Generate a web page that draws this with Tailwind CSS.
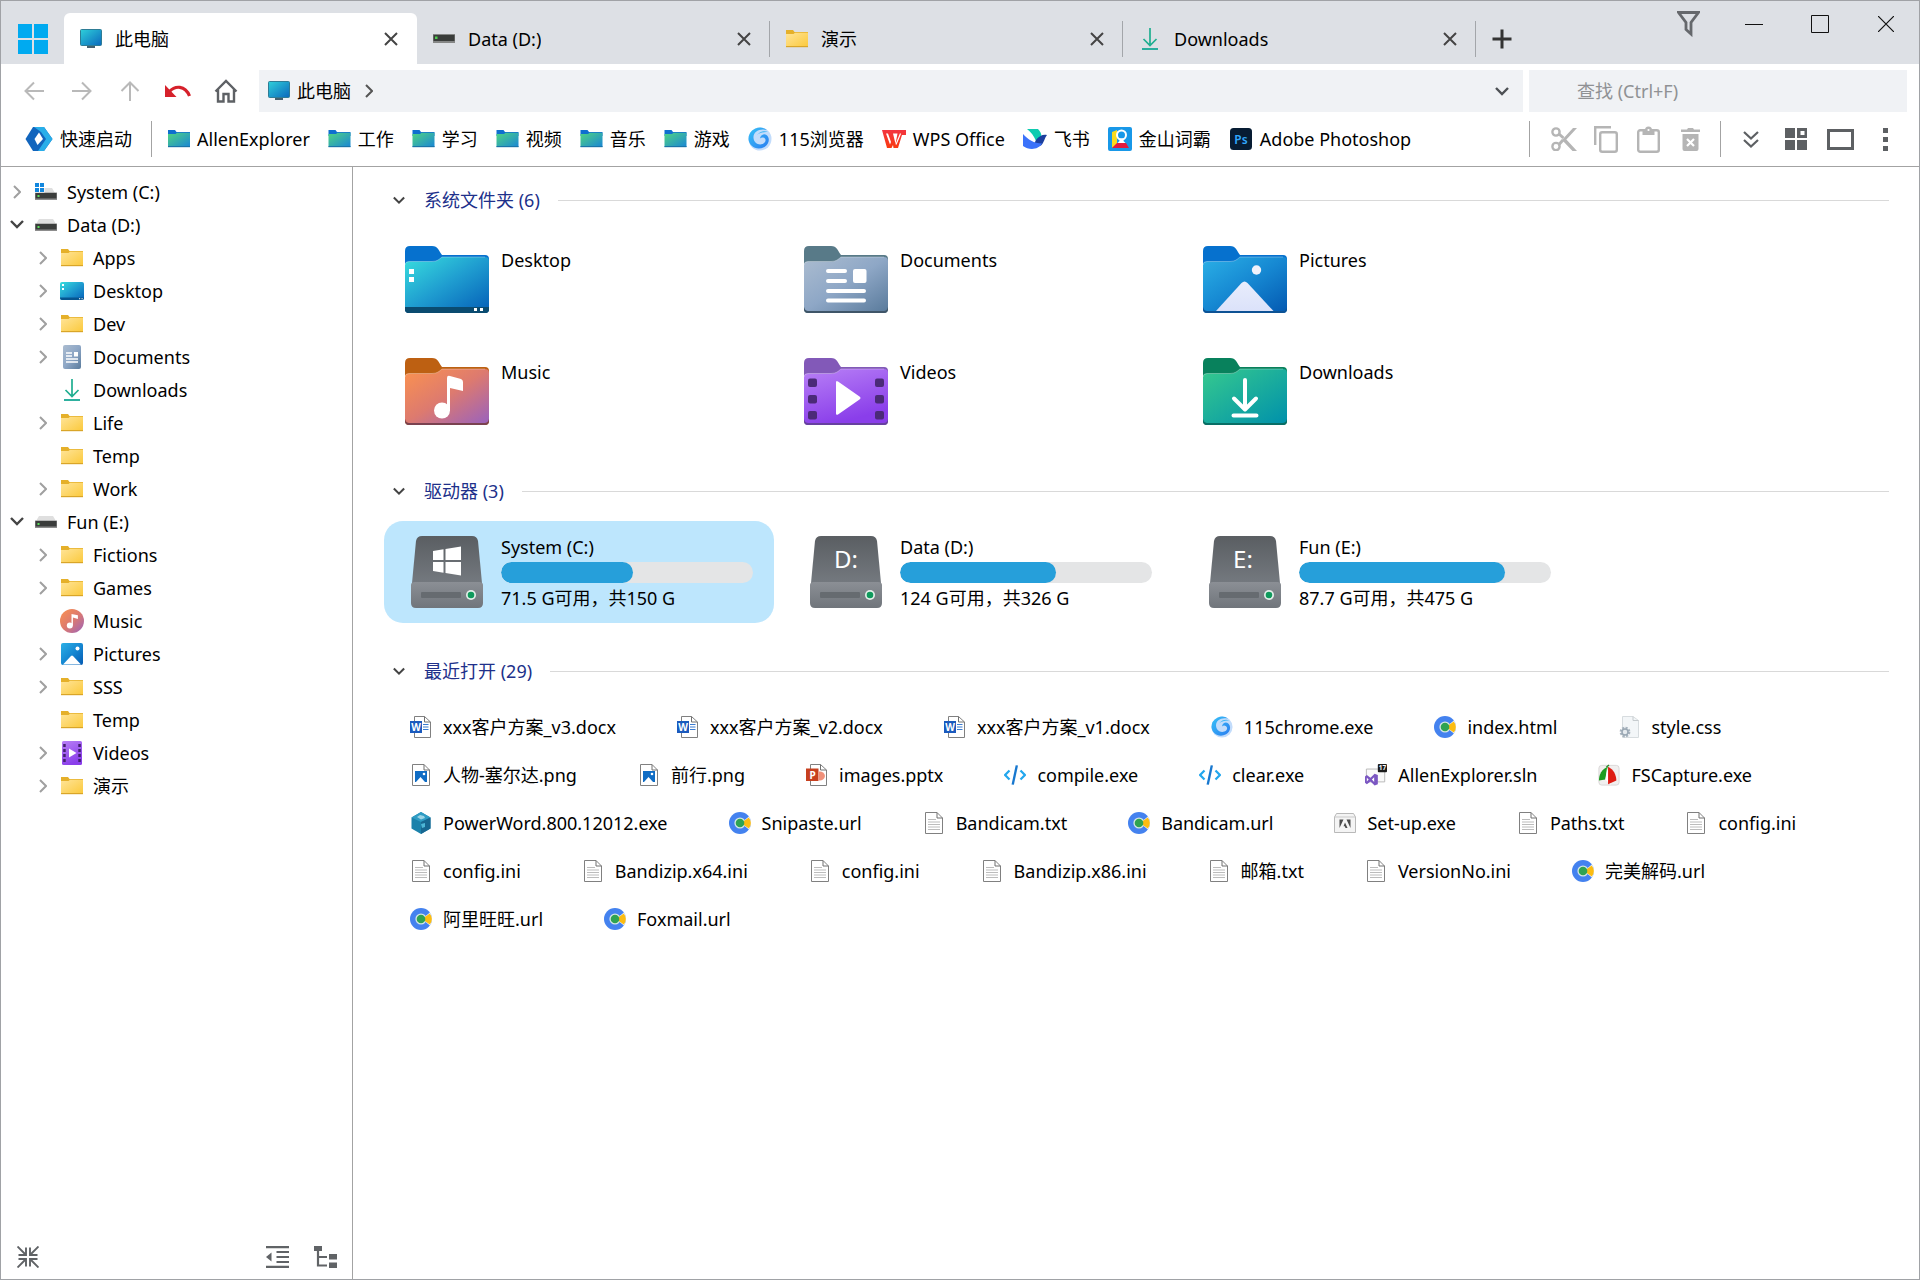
<!DOCTYPE html>
<html lang="zh-CN">
<head>
<meta charset="utf-8">
<title>AllenExplorer</title>
<script src="https://cdn.jsdelivr.net/npm/@tailwindcss/browser@4"></script>
</head>
<body class="min-h-screen flex flex-col border border-[#a0a2a6] bg-white text-lg text-black font-['Noto_Sans','Noto_Sans_CJK_SC',sans-serif]">

<!-- Icon library -->
<svg width="0" height="0" class="absolute top-0 left-0" aria-hidden="true">
  <defs>
    <linearGradient id="g-pc" x1="0" y1="0" x2="1" y2="1"><stop offset="0" stop-color="#2ed0da"/><stop offset="1" stop-color="#0b68bd"/></linearGradient>
    <linearGradient id="g-desk" x1="0" y1="0" x2="1" y2="1"><stop offset="0" stop-color="#38dede"/><stop offset=".5" stop-color="#1f9dd0"/><stop offset="1" stop-color="#0560b8"/></linearGradient>
    <linearGradient id="g-doc" x1="0" y1="0" x2="1" y2="1"><stop offset="0" stop-color="#abbcd0"/><stop offset=".5" stop-color="#8ea7c6"/><stop offset="1" stop-color="#5a7b9c"/></linearGradient>
    <linearGradient id="g-pic" x1="0" y1="0" x2="1" y2="1"><stop offset="0" stop-color="#2bb0e6"/><stop offset=".5" stop-color="#1688d2"/><stop offset="1" stop-color="#045ab2"/></linearGradient>
    <linearGradient id="g-mus" x1="0" y1="0" x2="1" y2="1"><stop offset="0" stop-color="#fb924f"/><stop offset=".5" stop-color="#dd7a6f"/><stop offset="1" stop-color="#9a62bd"/></linearGradient>
    <linearGradient id="g-vid" x1="0" y1="0" x2=".4" y2="1"><stop offset="0" stop-color="#b880f6"/><stop offset="1" stop-color="#8a3eea"/></linearGradient>
    <linearGradient id="g-down" x1="0" y1="0" x2="1" y2="1"><stop offset="0" stop-color="#36c98e"/><stop offset="1" stop-color="#0091ab"/></linearGradient>
    <linearGradient id="g-mt" x1="0" y1="0" x2="0" y2="1"><stop offset="0" stop-color="#e9edfc"/><stop offset="1" stop-color="#dbe2fa"/></linearGradient>
    <linearGradient id="g-fold" x1="0" y1="0" x2="1" y2="1"><stop offset="0" stop-color="#ffe498"/><stop offset="1" stop-color="#fbc93b"/></linearGradient>
    <linearGradient id="g-gfold" x1="0" y1="0" x2="1" y2="1"><stop offset="0" stop-color="#4fd482"/><stop offset="1" stop-color="#1a86d6"/></linearGradient>
    <linearGradient id="g-drv" x1="0" y1="0" x2="0" y2="1"><stop offset="0" stop-color="#5a5e62"/><stop offset="1" stop-color="#74797f"/></linearGradient>
    <linearGradient id="g-drvf" x1="0" y1="0" x2="0" y2="1"><stop offset="0" stop-color="#8b8f95"/><stop offset="1" stop-color="#70757b"/></linearGradient>
    <linearGradient id="g-115" x1="0" y1="0" x2="1" y2="1"><stop offset="0" stop-color="#38c2f7"/><stop offset="1" stop-color="#2a7df0"/></linearGradient>
    <linearGradient id="g-wps" x1="0" y1="0" x2="0" y2="1"><stop offset="0" stop-color="#f23540"/><stop offset="1" stop-color="#fa3a10"/></linearGradient>
  </defs>

  <symbol id="i-pc" viewBox="0 0 22 20"><path d="M7 17h8v2H7zM9.500 15.500h3V18h-3z" fill="#45616f"/><rect x=".5" y=".5" width="21" height="16" rx="1" fill="url(#g-pc)" stroke="#2e7c95"/></symbol>
  <symbol id="i-drive" viewBox="0 0 22 12"><path d="M4 0h14l3 5H1z" fill="#dfdfdf"/><path d="M0 4.500h22V12H0z" fill="#8d8d8d"/><path d="M.500 5h21v5.500H.500z" fill="#3b3d3c"/><path d="M2.500 7h2v2h-2z" fill="#5ce05c"/></symbol>
  <symbol id="i-tabdrive" viewBox="0 0 22 9"><path d="M0 0h22v9H0z" fill="#858786"/><path d="M.500 1h21v6H.500z" fill="#3a3d3b"/><path d="M2 2.500h2.500V5H2z" fill="#4fd04f"/></symbol>
  <symbol id="i-sysdrive" viewBox="0 0 22 18"><path d="M6 5h11l3 5H3z" fill="#dfdfdf"/><path d="M0 9.500h22V17H0z" fill="#8d8d8d"/><path d="M.500 10h21v5.500H.500z" fill="#3b3d3c"/><path d="M2.500 12h2v2h-2z" fill="#5ce05c"/><path d="M0 0h9.500v9.500H0z" fill="#fff"/><path d="M0 0h4v4H0zM5 0h4v4H5zM0 5h4v4H0zM5 5h4v4H5z" fill="#1287de"/></symbol>
  <symbol id="i-folder" viewBox="0 0 22 18"><path d="M0 0h7l1.500 2H22v14H0z" fill="#e5b02a"/><path d="M0 4h7.500L9 2.800h13V17H0z" fill="url(#g-fold)"/><path d="M0 16h22v1.200H0z" fill="#d9a528"/></symbol>
  <symbol id="i-gfolder" viewBox="0 0 22 18"><path d="M0 0h7l1.500 2H22v4H0z" fill="#0f6fcf"/><path d="M0 4h7.500L9 2.800h13V17H0z" fill="url(#g-gfold)"/><path d="M0 16h22v1.200H0z" fill="#1a74a8"/></symbol>
  <symbol id="i-desktop" viewBox="0 0 24 18"><rect width="24" height="18" rx="2" fill="url(#g-desk)"/><path d="M0 15.500h24V16q0 2-2 2H2q-2 0-2-2z" fill="#06558f"/><path d="M2 2h2v2H2zM2 6h2v2H2zM19 16.200h1.200v1H19zM21.500 16.200h1.200v1h-1.200z" fill="#fff"/></symbol>
  <symbol id="i-docs" viewBox="0 0 18 24"><rect width="18" height="24" rx="2" fill="url(#g-doc)"/><path d="M3 8h6M3 11h6M3 14h12M3 17h12" stroke="#fff" stroke-width="1.300"/><path d="M11 7h4v4.500h-4z" fill="#fff"/></symbol>
  <symbol id="i-download" viewBox="0 0 16 22"><path d="M8 0v17M1.500 11 8 17.500 14.500 11" fill="none" stroke="#1fae90" stroke-width="1.700"/><path d="M0 21h16" stroke="#17a795" stroke-width="1.800"/></symbol>
  <symbol id="i-music" viewBox="0 0 24 24"><circle cx="12" cy="12" r="12" fill="url(#g-mus)"/><circle cx="9.800" cy="16.500" r="3" fill="#fff"/><path d="M11.500 5v11.500h1.400V8.600l5 1.400V6.200z" fill="#fff"/></symbol>
  <symbol id="i-pics" viewBox="0 0 22 22"><rect width="22" height="22" rx="2" fill="url(#g-pic)"/><circle cx="16.500" cy="5.500" r="2" fill="#fff"/><path d="M2 21.500 10 13q1-1 2 0l8 8.500z" fill="#fff"/></symbol>
  <symbol id="i-videos" viewBox="0 0 20 24"><rect width="20" height="24" rx="1.500" fill="url(#g-vid)"/><path d="M1.200 3h2.500v3H1.200zm0 5h2.500v3H1.200zm0 5h2.500v3H1.200zm0 5h2.500v3H1.200zM16.300 3h2.500v3h-2.500zm0 5h2.500v3h-2.500zm0 5h2.500v3h-2.500zm0 5h2.500v3h-2.500z" fill="#42206e"/><path d="M7 7.500 14.500 12 7 16.500z" fill="#fff"/></symbol>
  <symbol id="i-right" viewBox="0 0 8 14"><path d="m1 1 6 6-6 6" fill="none" stroke="currentColor" stroke-width="2"/></symbol>
  <symbol id="i-chev" viewBox="0 0 14 9"><path d="m1 1 6 6 6-6" fill="none" stroke="currentColor" stroke-width="2.400"/></symbol>
  <symbol id="i-x" viewBox="0 0 14 14"><path d="m1 1 12 12M13 1 1 13" fill="none" stroke="currentColor" stroke-width="2"/></symbol>

  <symbol id="f-base" viewBox="0 0 84 67"><path d="M0 5q0-5 5-5h22c6 0 7 5 10 9h43q4 0 4 4v50q0 4-4 4H4q-4 0-4-4z" fill="currentColor"/></symbol>
  <symbol id="f-front" viewBox="0 0 84 67"><path d="M0 19q0-3.500 4-3.500h23c5 0 7-2 10-4.500h43q4 0 4 4v46q0 4-4 4H4q-4 0-4-4z"/><path d="M0 19q0-3.500 4-3.500h23c5 0 7-2 10-4.500h43" fill="none" stroke="#fff" stroke-opacity=".3"/></symbol>

  <symbol id="i-txt" viewBox="0 0 18 22"><path d="M.500.500h11.500l5.500 5.500v15.500H.500z" fill="#fff" stroke="#808080"/><path d="M12 .500V6h5.500" fill="none" stroke="#707070"/><path d="M3 7.500h8M3 10h12M3 12.500h12M3 15h12M3 17.500h12" stroke="#b4b4b4" stroke-width=".900"/></symbol>
  <symbol id="i-word" viewBox="0 0 22 22"><path d="M4.500.500h10L20.500 6v15.500h-16z" fill="#fff" stroke="#808080"/><path d="M14.500.500V6h6" fill="none" stroke="#707070"/><path d="M13 8.500h5.500M13 11h5.500M13 13.500h5.500" stroke="#3a7bd0" stroke-width="1.200"/><path d="M0 5h12v12H0z" fill="#1b5abd"/></symbol>
  <symbol id="i-ppt" viewBox="0 0 22 22"><path d="M4.500.500h10L20.500 6v15.500h-16z" fill="#fff" stroke="#808080"/><path d="M14.500.500V6h6" fill="none" stroke="#707070"/><path d="M13 7.500a5 5 0 0 1 6 4.500 5 5 0 0 1-6 4.500z" fill="#f0907a"/><path d="M0 4.500h12.500v12.500H0z" fill="#c7401f"/></symbol>
  <symbol id="i-png" viewBox="0 0 18 22"><path d="M.500.500h11.500l5.500 5.500v15.500H.500z" fill="#fff" stroke="#808080"/><path d="M12 .500V6h5.500" fill="none" stroke="#707070"/><path d="M3 7h12v11H3z" fill="#0f6cc4"/><circle cx="12" cy="10" r="1.300" fill="#fff"/><path d="M4 18l4.500-5 4.500 5z" fill="#fff"/></symbol>
  <symbol id="i-chrome" viewBox="0 0 22 22"><circle cx="11" cy="11" r="11" fill="#4482ef"/><path d="M12 11 20 4.500Q24 11 20 17.500z" fill="#fff"/><circle cx="11" cy="11" r="5.600" fill="#d5e6e4"/><path d="M14.500 9.200 19.800 5.500Q24 11 19.800 16.500L14.500 12.800z" fill="#fbbc12"/><circle cx="11" cy="11" r="4.300" fill="#2fa352"/></symbol>
  <symbol id="i-115" viewBox="0 0 24 24"><circle cx="12" cy="12" r="11.500" fill="#c2dcfb"/><path d="M.500 12A11.500 11.500 0 0 1 19 3C11 1 5 5 5.500 11c.5 5 5 7.500 9 6 4-1.500 4-6 .5-6.500-1-.2-2 .1-3 1C12.500 8 16 6 18.500 8c4 3 2.500 9.500-2 12C9 24 1 19.500.500 12z" fill="url(#g-115)"/><path d="M9 8c3-4 8-4.500 11-3-4-.5-8 .5-11 3z" fill="#3ab5f5"/></symbol>
  <symbol id="i-code" viewBox="0 0 24 22"><path d="M6 6 1.200 11 6 16M18 6l4.800 5L18 16" fill="none" stroke="#22a7ee" stroke-width="2.400"/><path d="M14 .500 9.500 21.500" stroke="#1878cf" stroke-width="2.600"/></symbol>
  <symbol id="i-css" viewBox="0 0 20 22"><path d="M3.500.500H14l5.500 4v17h-16z" fill="#f3f6f8" stroke="#d7dcdf"/><path d="M14 .500v4h5.500" fill="none" stroke="#c6cbce"/><circle cx="6" cy="16" r="4" fill="none" stroke="#a9b4bf" stroke-width="2.800" stroke-dasharray="2 1.140"/><circle cx="6" cy="16" r="3" fill="#e5eaee" stroke="#9aa7b3" stroke-width="1.500"/></symbol>
  <symbol id="i-vs" viewBox="0 0 24 24"><path d="M1.500 5.500h20v14h-20z" fill="#fafafa" stroke="#b5b5b5"/><path d="M0 13.500 2 12l4 3 4.500-4.500L14 12v10l-3.500 1.500L6 19l-4 3-2-1.500z" fill="#7b57c2"/><path d="M2 15v4l2-2zM10 14.500 7.500 17l2.500 2.500z" fill="#fff"/><rect x="14" y="0" width="10" height="9" rx="1" fill="#1d1d1d"/></symbol>
  <symbol id="i-fs" viewBox="0 0 24 24"><rect x="1" y="1.500" width="22" height="21.500" rx="3" fill="#f1efef" stroke="#d8d5d5"/><path d="M11 3C4 5 1 12 1 18l7-1z" fill="#1d9c1f"/><path d="M10 3l-2 14 6 6z" fill="#fff"/><path d="M11 3c6 3 9 9 9 15l-9 4z" fill="#de1c13"/><path d="M9 3.500 12 1" stroke="#2b8a2b" stroke-width="1.500"/></symbol>
  <symbol id="i-cube" viewBox="0 0 20 22"><path d="M10 0l9.500 5.500v11L10 22 .500 16.500v-11z" fill="#1b82ab"/><path d="M10 0l9.500 5.500L10 10 .500 5.500z" fill="#2f9cc4"/><path d="M10 10l9.500-4.500v11L10 22z" fill="#176791"/><path d="M6 5l3-2 4 1 1 2-4 1.500z" fill="#c9ecf5" opacity=".7"/><path d="M10 12l4-1v4l-3 1z" fill="#4eb6d6"/></symbol>
  <symbol id="i-setup" viewBox="0 0 22 20"><path d="M2.500.500h17l2 3.500v15.500H.500V4z" fill="#f4f4f4" stroke="#b9b9b9"/><path d="M.500 4h21" stroke="#c9c9c9"/><path d="M5.500 15V6.500h4zM16.500 15V6.500h-4zM11 9.500l2.500 5.500h-2l-.7-1.700H9.500z" fill="#4b4b4b"/></symbol>
  <symbol id="i-win" viewBox="0 0 30 30"><path d="M0 0h14v14H0zM16 0h14v14H16zM0 16h14v14H0zM16 16h14v14H16z" fill="#00aaf0"/></symbol>
</svg>

<header>
  <div class="flex h-[63px] bg-[#dde0e5]">
    <button class="w-[63px] shrink-0 flex justify-center pt-[23px]" aria-label="菜单"><svg class="size-[30px]"><use href="#i-win"/></svg></button>
    <div class="flex min-w-0 items-end" role="tablist">
      <div class="flex w-[353px] min-w-0 h-[51px] items-center rounded-t-md bg-white pl-4 pr-[19px]">
        <button role="tab" aria-selected="true" class="flex flex-1 min-w-0 items-center gap-[13px] text-left"><svg class="w-[22px] h-5 shrink-0"><use href="#i-pc"/></svg><span class="truncate">此电脑</span></button>
        <button aria-label="关闭" class="text-[#444]"><svg class="size-3.5"><use href="#i-x"/></svg></button>
      </div>
      <div class="flex w-[353px] min-w-0 h-[51px] items-center pl-4">
        <button role="tab" class="flex flex-1 min-w-0 items-center gap-[13px] text-left"><svg class="w-[22px] h-[9px] shrink-0"><use href="#i-tabdrive"/></svg><span class="truncate">Data (D:)</span></button>
        <button aria-label="关闭" class="text-[#444]"><svg class="size-3.5"><use href="#i-x"/></svg></button>
        <span class="ml-[18px] h-9 w-px bg-[#a3a6aa]"></span>
      </div>
      <div class="flex w-[353px] min-w-0 h-[51px] items-center pl-4">
        <button role="tab" class="flex flex-1 min-w-0 items-center gap-[13px] text-left"><svg class="w-[22px] h-[18px] shrink-0"><use href="#i-folder"/></svg><span class="truncate">演示</span></button>
        <button aria-label="关闭" class="text-[#444]"><svg class="size-3.5"><use href="#i-x"/></svg></button>
        <span class="ml-[18px] h-9 w-px bg-[#a3a6aa]"></span>
      </div>
      <div class="flex w-[353px] min-w-0 h-[51px] items-center pl-4">
        <button role="tab" class="flex flex-1 min-w-0 items-center gap-[13px] text-left"><svg class="w-[22px] h-[22px] shrink-0"><use href="#i-download"/></svg><span class="truncate">Downloads</span></button>
        <button aria-label="关闭" class="text-[#444]"><svg class="size-3.5"><use href="#i-x"/></svg></button>
        <span class="ml-[18px] h-9 w-px bg-[#a3a6aa]"></span>
      </div>
      <button aria-label="新标签页" class="flex h-[51px] w-[52px] shrink-0 items-center justify-center"><svg class="size-5" viewBox="0 0 20 20"><path d="M10 .500v19M.500 10h19" stroke="#333" stroke-width="3"/></svg></button>
    </div>
    <div class="ml-auto flex h-[46px] shrink-0">
      <button aria-label="筛选" class="flex w-[66px] items-center justify-center"><svg class="h-[26px] w-[23px]" viewBox="0 0 23 26"><path d="M1.500 1.500h20L14 11.500V23l-5-4.500v-7z" fill="none" stroke="#65686c" stroke-width="2.800"/></svg></button>
      <button aria-label="最小化" class="flex w-[66px] items-center justify-center"><svg class="size-[18px]" viewBox="0 0 18 18"><path d="M0 9.500h18" stroke="#111"/></svg></button>
      <button aria-label="最大化" class="flex w-[66px] items-center justify-center"><svg class="size-[18px]" viewBox="0 0 18 18"><path d="M.500.500h17v17H.500z" fill="none" stroke="#111"/></svg></button>
      <button aria-label="关闭窗口" class="flex w-[66px] items-center justify-center"><svg class="size-[16px]" viewBox="0 0 16 16"><path d="m0 0 16 16M16 0 0 16" stroke="#111" stroke-width="1.200"/></svg></button>
    </div>
  </div>

  <div class="flex pt-1.5 pl-[9px] pr-3">
    <div class="flex h-[42px] shrink-0 text-[#b9b9b9]">
      <button aria-label="后退" class="flex w-12 items-center justify-center"><svg class="size-5" viewBox="0 0 20 20"><path d="M20 10H2M10 1.500 1.500 10l8.500 8.500" fill="none" stroke="currentColor" stroke-width="2"/></svg></button>
      <button aria-label="前进" class="flex w-12 items-center justify-center"><svg class="size-5" viewBox="0 0 20 20"><path d="M0 10h18M10 1.500l8.500 8.500-8.500 8.500" fill="none" stroke="currentColor" stroke-width="2"/></svg></button>
      <button aria-label="向上" class="flex w-12 items-center justify-center"><svg class="size-5" viewBox="0 0 20 20"><path d="M10 20V2M1.500 10 10 1.500l8.500 8.500" fill="none" stroke="currentColor" stroke-width="2"/></svg></button>
      <button aria-label="撤销" class="flex w-12 items-center justify-center"><svg class="h-3 w-[26px]" viewBox="0 0 26 12"><path d="M0 0v12h11.500z" fill="#d6212b"/><path d="M4.500 6.500C10 .500 20 0 24.500 11" fill="none" stroke="#d6212b" stroke-width="3.200"/></svg></button>
      <button aria-label="主页" class="flex w-12 items-center justify-center"><svg class="size-6" viewBox="0 0 24 24"><path d="M1.500 12.500 12 2l10.500 10.500M4 10.500V22.500h5.500V15h5v7.500H20V10.500" fill="none" stroke="#5e6165" stroke-width="2.400"/></svg></button>
    </div>
    <nav class="ml-[9px] flex h-[42px] flex-1 items-center bg-[#f0f2f5] pl-[9px] pr-3.5" aria-label="地址">
      <a href="#" class="flex items-center gap-[7px]"><svg class="h-5 w-[22px]"><use href="#i-pc"/></svg>此电脑</a>
      <button aria-label="展开" class="ml-3.5 text-[#555]"><svg class="h-3.5 w-2"><use href="#i-right"/></svg></button>
      <button aria-label="历史" class="ml-auto text-[#4d5054]"><svg class="h-[9px] w-3.5"><use href="#i-chev"/></svg></button>
    </nav>
    <input type="search" aria-label="查找" placeholder="查找 (Ctrl+F)" class="ml-1.5 h-[42px] w-[378px] bg-[#f0f2f5] pl-12 outline-none placeholder:text-[#8f9194]">
  </div>

  <div class="flex h-[55px] items-center border-b border-[#a3a3a3] pl-6 pr-[11px] whitespace-nowrap">
    <a href="#" class="flex items-center gap-[7px]"><svg class="h-6 w-7" viewBox="0 0 28 24"><path d="M8 0h11l8.500 12L19 24H8L.500 12z" fill="#1265bd"/><path d="M9 0h10l8.500 12L19 24h-6l8-12-5-7z" fill="#28aee9"/><path d="M14 5.500 9.500 12l3 6L18 12z" fill="#fff"/></svg>快速启动</a>
    <span class="ml-[19px] h-9 w-px bg-[#a3a3a3]"></span>
    <nav class="ml-4 flex min-w-0 items-center gap-[18px] overflow-hidden" aria-label="快速启动">
      <a href="#" class="flex items-center gap-[7px]"><svg class="h-[18px] w-[22px]"><use href="#i-gfolder"/></svg>AllenExplorer</a>
      <a href="#" class="flex items-center gap-[7px]"><svg class="h-[18px] w-[23px]"><use href="#i-gfolder"/></svg>工作</a>
      <a href="#" class="flex items-center gap-[7px]"><svg class="h-[18px] w-[23px]"><use href="#i-gfolder"/></svg>学习</a>
      <a href="#" class="flex items-center gap-[7px]"><svg class="h-[18px] w-[23px]"><use href="#i-gfolder"/></svg>视频</a>
      <a href="#" class="flex items-center gap-[7px]"><svg class="h-[18px] w-[23px]"><use href="#i-gfolder"/></svg>音乐</a>
      <a href="#" class="flex items-center gap-[7px]"><svg class="h-[18px] w-[23px]"><use href="#i-gfolder"/></svg>游戏</a>
      <a href="#" class="flex items-center gap-[7px]"><svg class="size-6"><use href="#i-115"/></svg>115浏览器</a>
      <a href="#" class="flex items-center gap-[7px]"><svg class="h-[18px] w-6" viewBox="0 0 24 18"><path d="M0 0h24v5h-4L16 18h-4.500L11 15 9.500 18H5z" fill="url(#g-wps)"/><path d="M4 3.500h2L9 12l-1 2.500zM11 3.500h4.500L13.500 14z" fill="#fff"/><path d="M18.500 3.500 14 14.500" stroke="#fff" stroke-width="1.200"/></svg>WPS Office</a>
      <a href="#" class="flex items-center gap-[7px]"><svg class="h-5 w-6" viewBox="0 0 24 20"><path d="M4 0h11c2.500 2.500 3.500 5 3.500 7.500L13 12C11 7 8 3 4 0z" fill="#0fcbb0"/><path d="M13 11c3-4 7-6 11-5-2.500 3-3 8-6 10.500-2 1-5 0-7-1.500z" fill="#1c3f9e"/><path d="M0 5c5 5.500 11 9.500 19 9.500C15.500 21 6 21.500 0 17z" fill="#3b72fa"/></svg>飞书</a>
      <a href="#" class="flex items-center gap-[7px]"><svg class="size-6" viewBox="0 0 24 24"><rect width="24" height="24" rx="2" fill="#1898e8"/><path d="M4 5l5-2v14l-5 4z" fill="#fadb1d"/><path d="M9 16h9l3 5H4z" fill="#e21a3f"/><circle cx="13.500" cy="8" r="4.500" fill="none" stroke="#fff" stroke-width="2"/><path d="M11.500 11.500h4V14l2 2h-8l2-2z" fill="#fff"/></svg>金山词霸</a>
      <a href="#" class="flex items-center gap-[7px]"><svg class="h-[22px] w-6" viewBox="0 0 24 22"><rect x="1" width="22" height="22" rx="3.500" fill="#071c33"/><text x="12" y="15.500" font-size="12" font-weight="600" fill="#31a8ff" text-anchor="middle">Ps</text></svg>Adobe Photoshop</a>
    </nav>
    <div class="ml-auto flex shrink-0 items-center text-[#b5b5b5]">
      <span class="mr-[13px] h-9 w-px bg-[#a3a3a3]"></span>
      <button aria-label="剪切" class="flex w-[42px] justify-center"><svg class="h-6 w-[26px]" viewBox="0 0 26 24"><circle cx="5" cy="5" r="3.600" fill="none" stroke="currentColor" stroke-width="2.400"/><circle cx="5" cy="19.500" r="3.600" fill="none" stroke="currentColor" stroke-width="2.400"/><path d="M8 7l4.500 4M8 17.500 12 13" stroke="currentColor" stroke-width="3"/><path d="M10.500 13.500 22 1h4L14 14zM13.500 10.500 26 24h-4.500L11 13z" fill="currentColor"/></svg></button>
      <button aria-label="复制" class="flex w-[42px] justify-center"><svg class="h-[27px] w-6" viewBox="0 0 24 27"><path d="M1.200 19V1.200H17" fill="none" stroke="currentColor" stroke-width="2.400"/><rect x="6.200" y="6.200" width="16.600" height="19.600" rx="2" fill="none" stroke="currentColor" stroke-width="2.400"/></svg></button>
      <button aria-label="粘贴" class="flex w-[42px] justify-center"><svg class="h-[27px] w-[23px]" viewBox="0 0 23 27"><rect x="1.200" y="4.200" width="20.600" height="21.600" rx="2" fill="none" stroke="currentColor" stroke-width="2.400"/><path d="M5.500 4H8a3.500 3.500 0 0 1 7 0h2.500v5h-12z" fill="currentColor"/><circle cx="11.500" cy="4" r="1.100" fill="#fff"/></svg></button>
      <button aria-label="删除" class="flex w-[42px] justify-center"><svg class="h-[23px] w-[19px]" viewBox="0 0 19 23"><path d="M0 1.500h6L7 0h5l1 1.500h6V4H0zM1.500 6h16v15q0 2-2 2h-12q-2 0-2-2z" fill="currentColor"/><path d="m6 11 7 7M13 11l-7 7" stroke="#fff" stroke-width="2.200"/></svg></button>
      <span class="ml-[9px] mr-[7px] h-9 w-px bg-[#a3a3a3]"></span>
      <button aria-label="更多" class="flex w-[45px] justify-center text-[#5d6063]"><svg class="h-[17px] w-4" viewBox="0 0 16 17"><path d="m1 1 7 6.500L15 1M1 9l7 6.500L15 9" fill="none" stroke="currentColor" stroke-width="2.200"/></svg></button>
      <button aria-label="视图" class="flex w-[45px] justify-center text-[#5d6063]"><svg class="size-[22px]" viewBox="0 0 22 22"><path d="M0 0h10v10H0zM0 12h10v10H0zM12 12h10v10H12zM12 0h10v10H12zm3.500 3v4h4V3z" fill="currentColor" fill-rule="evenodd"/></svg></button>
      <button aria-label="窗格" class="flex w-[45px] justify-center text-[#5d6063]"><svg class="h-[21px] w-[27px]" viewBox="0 0 27 21"><path d="M1.500 1.500h24v18h-24z" fill="none" stroke="currentColor" stroke-width="3"/></svg></button>
      <button aria-label="选项" class="flex w-[45px] justify-center text-[#5d6063]"><svg class="h-[23px] w-[5px]" viewBox="0 0 5 23"><path d="M0 0h5v5H0zM0 9h5v5H0zM0 18h5v5H0z" fill="currentColor"/></svg></button>
    </div>
  </div>
</header>

<div class="flex flex-1">
  <aside class="flex w-[352px] shrink-0 flex-col border-r border-[#a3a3a3]">
    <nav class="pt-2" aria-label="文件夹">
      <ul class="[&_a]:flex [&_a]:h-[33px] [&_a]:items-center">
        <li><a href="#"><span class="flex w-8 justify-center text-[#a0a0a0]"><svg class="h-3.5 w-2"><use href="#i-right"/></svg></span><svg class="ml-0.5 mr-2.5 h-[18px] w-[22px]"><use href="#i-sysdrive"/></svg>System (C:)</a></li>
        <li><a href="#"><span class="flex w-8 justify-center text-[#444]"><svg class="h-[9px] w-3.5"><use href="#i-chev"/></svg></span><svg class="ml-0.5 mr-2.5 h-3 w-[22px]"><use href="#i-drive"/></svg>Data (D:)</a>
          <ul class="pl-[26px]">
            <li><a href="#"><span class="flex w-8 justify-center text-[#a0a0a0]"><svg class="h-3.5 w-2"><use href="#i-right"/></svg></span><svg class="mx-px mr-[9px] h-[18px] w-6"><use href="#i-folder"/></svg>Apps</a></li>
            <li><a href="#"><span class="flex w-8 justify-center text-[#a0a0a0]"><svg class="h-3.5 w-2"><use href="#i-right"/></svg></span><svg class="mx-px mr-[9px] h-[18px] w-6"><use href="#i-desktop"/></svg>Desktop</a></li>
            <li><a href="#"><span class="flex w-8 justify-center text-[#a0a0a0]"><svg class="h-3.5 w-2"><use href="#i-right"/></svg></span><svg class="mx-px mr-[9px] h-[18px] w-6"><use href="#i-folder"/></svg>Dev</a></li>
            <li><a href="#"><span class="flex w-8 justify-center text-[#a0a0a0]"><svg class="h-3.5 w-2"><use href="#i-right"/></svg></span><svg class="mx-px mr-[9px] size-6"><use href="#i-docs"/></svg>Documents</a></li>
            <li><a href="#"><span class="w-8"></span><svg class="mx-px mr-[9px] h-[22px] w-6"><use href="#i-download"/></svg>Downloads</a></li>
            <li><a href="#"><span class="flex w-8 justify-center text-[#a0a0a0]"><svg class="h-3.5 w-2"><use href="#i-right"/></svg></span><svg class="mx-px mr-[9px] h-[18px] w-6"><use href="#i-folder"/></svg>Life</a></li>
            <li><a href="#"><span class="w-8"></span><svg class="mx-px mr-[9px] h-[18px] w-6"><use href="#i-folder"/></svg>Temp</a></li>
            <li><a href="#"><span class="flex w-8 justify-center text-[#a0a0a0]"><svg class="h-3.5 w-2"><use href="#i-right"/></svg></span><svg class="mx-px mr-[9px] h-[18px] w-6"><use href="#i-folder"/></svg>Work</a></li>
          </ul>
        </li>
        <li><a href="#"><span class="flex w-8 justify-center text-[#444]"><svg class="h-[9px] w-3.5"><use href="#i-chev"/></svg></span><svg class="ml-0.5 mr-2.5 h-3 w-[22px]"><use href="#i-drive"/></svg>Fun (E:)</a>
          <ul class="pl-[26px]">
            <li><a href="#"><span class="flex w-8 justify-center text-[#a0a0a0]"><svg class="h-3.5 w-2"><use href="#i-right"/></svg></span><svg class="mx-px mr-[9px] h-[18px] w-6"><use href="#i-folder"/></svg>Fictions</a></li>
            <li><a href="#"><span class="flex w-8 justify-center text-[#a0a0a0]"><svg class="h-3.5 w-2"><use href="#i-right"/></svg></span><svg class="mx-px mr-[9px] h-[18px] w-6"><use href="#i-folder"/></svg>Games</a></li>
            <li><a href="#"><span class="w-8"></span><svg class="mx-px mr-[9px] size-6"><use href="#i-music"/></svg>Music</a></li>
            <li><a href="#"><span class="flex w-8 justify-center text-[#a0a0a0]"><svg class="h-3.5 w-2"><use href="#i-right"/></svg></span><svg class="mx-px mr-[9px] h-[22px] w-6"><use href="#i-pics"/></svg>Pictures</a></li>
            <li><a href="#"><span class="flex w-8 justify-center text-[#a0a0a0]"><svg class="h-3.5 w-2"><use href="#i-right"/></svg></span><svg class="mx-px mr-[9px] h-[18px] w-6"><use href="#i-folder"/></svg>SSS</a></li>
            <li><a href="#"><span class="w-8"></span><svg class="mx-px mr-[9px] h-[18px] w-6"><use href="#i-folder"/></svg>Temp</a></li>
            <li><a href="#"><span class="flex w-8 justify-center text-[#a0a0a0]"><svg class="h-3.5 w-2"><use href="#i-right"/></svg></span><svg class="mx-px mr-[9px] size-6"><use href="#i-videos"/></svg>Videos</a></li>
            <li><a href="#"><span class="flex w-8 justify-center text-[#a0a0a0]"><svg class="h-3.5 w-2"><use href="#i-right"/></svg></span><svg class="mx-px mr-[9px] h-[18px] w-6"><use href="#i-folder"/></svg>演示</a></li>
          </ul>
        </li>
      </ul>
    </nav>
    <div class="mt-auto flex items-center pb-[11px] pl-4 pr-[15px] text-[#606366]">
      <button aria-label="全部折叠"><svg class="size-[22px]" viewBox="0 0 22 22"><path d="M.500.500l8 8M21.500.500l-8 8M.500 21.500l8-8M21.500 21.500l-8-8" stroke="currentColor" stroke-width="1.900"/><path d="M9 1.500V9H1.500M13 1.500V9h7.500M9 20.500V13H1.500M13 20.500V13h7.500" fill="none" stroke="currentColor" stroke-width="1.900"/></svg></button>
      <button aria-label="减少缩进" class="ml-auto"><svg class="h-[22px] w-[23px]" viewBox="0 0 23 22"><path d="M0 1.200h23M10.500 6h12.500M10.500 11h12.500M10.500 16h12.500M0 20.800h23" stroke="currentColor" stroke-width="2.200"/><path d="M5.500 6.500v9L0 11z" fill="currentColor"/></svg></button>
      <button aria-label="树状视图" class="ml-[25px]"><svg class="h-[22px] w-[23px]" viewBox="0 0 23 22"><path d="M0 0h8v5H0zM15 8h8v5.500h-8zM15 16.500h8V22h-8z" fill="currentColor"/><path d="M4 5v14.500h9M4 11h9" fill="none" stroke="currentColor" stroke-width="2.200"/></svg></button>
    </div>
  </aside>

  <main class="min-w-0 flex-1 pt-[19px]">
    <section>
      <h2 class="flex items-center pl-10 pr-[30px] text-[#20308a]"><button class="flex items-center gap-[19px]"><svg class="h-[9px] w-3 text-[#444]"><use href="#i-chev"/></svg>系统文件夹 (6)</button><span class="ml-[18px] h-px flex-1 bg-[#d9d9d9]"></span></h2>
      <div class="mt-3.5 grid grid-cols-[repeat(auto-fill,390px)] gap-x-[9px] gap-y-2.5 pl-[31px] pr-[330px]">
        <a href="#" class="flex h-[102px] items-start gap-3 px-[21px] pt-[18px]"><svg class="h-[67px] w-[84px]" viewBox="0 0 84 67"><use href="#f-base" color="#0671ce"/><path d="M0 60h84v3q0 4-4 4H4q-4 0-4-4z" fill="#0a4668"/><use href="#f-front" fill="url(#g-desk)"/><path d="M0 61h84v2q0 4-4 4H4q-4 0-4-4z" fill="#0a4b70"/><path d="M4 23h5v5H4zM4 31h5v5H4zM69 62h3v3h-3zM75 62h3v3h-3z" fill="#fff"/></svg>Desktop</a>
        <a href="#" class="flex h-[102px] items-start gap-3 px-[21px] pt-[18px]"><svg class="h-[67px] w-[84px]" viewBox="0 0 84 67"><use href="#f-base" color="#587a88"/><use href="#f-front" fill="url(#g-doc)"/><path d="M0 61q1 4 4 4h76q3 0 4-4v2q0 4-4 4H4q-4 0-4-4z" fill="#3f5568"/><path d="M24 25h17M24 35h17M24 45h36M24 54.500h36" stroke="#fff" stroke-width="4" stroke-linecap="round"/><rect x="49" y="23" width="13.500" height="14" rx="2" fill="#fff"/></svg>Documents</a>
        <a href="#" class="flex h-[102px] items-start gap-3 px-[21px] pt-[18px]"><svg class="h-[67px] w-[84px]" viewBox="0 0 84 67"><use href="#f-base" color="#0671ce"/><use href="#f-front" fill="url(#g-pic)"/><path d="M0 61q1 4 4 4h76q3 0 4-4v2q0 4-4 4H4q-4 0-4-4z" fill="#0d5294"/><circle cx="53.500" cy="24" r="4.700" fill="#f0f2fb"/><path d="M13 65 38.500 37q3-3 6 0L70.500 65z" fill="url(#g-mt)"/></svg>Pictures</a>
        <a href="#" class="flex h-[102px] items-start gap-3 px-[21px] pt-[18px]"><svg class="h-[67px] w-[84px]" viewBox="0 0 84 67"><use href="#f-base" color="#bd6012"/><use href="#f-front" fill="url(#g-mus)"/><path d="M0 61q1 4 4 4h76q3 0 4-4v2q0 4-4 4H4q-4 0-4-4z" fill="#7a4250"/><circle cx="37" cy="52.500" r="8" fill="#fff"/><path d="M42 20q0-3 3-2l11 3q2 1 2 3v9l-13-3v23h-3z" fill="#fff"/></svg>Music</a>
        <a href="#" class="flex h-[102px] items-start gap-3 px-[21px] pt-[18px]"><svg class="h-[67px] w-[84px]" viewBox="0 0 84 67"><use href="#f-base" color="#8259b8"/><use href="#f-front" fill="url(#g-vid)"/><path d="M0 61q1 4 4 4h76q3 0 4-4v2q0 4-4 4H4q-4 0-4-4z" fill="#6740a0"/><g fill="#4b2a78"><rect x="4" y="20.500" width="9" height="8.500" rx="2"/><rect x="4" y="37" width="9" height="8.500" rx="2"/><rect x="4" y="53" width="9" height="8.500" rx="2"/><rect x="71" y="20.500" width="9" height="8.500" rx="2"/><rect x="71" y="37" width="9" height="8.500" rx="2"/><rect x="71" y="53" width="9" height="8.500" rx="2"/></g><path d="M32 24.500q0-2.500 2-1l21.500 15q2 1.500 0 3L34 56.500q-2 1-2-1z" fill="#fff"/></svg>Videos</a>
        <a href="#" class="flex h-[102px] items-start gap-3 px-[21px] pt-[18px]"><svg class="h-[67px] w-[84px]" viewBox="0 0 84 67"><use href="#f-base" color="#08815c"/><use href="#f-front" fill="url(#g-down)"/><path d="M0 61q1 4 4 4h76q3 0 4-4v2q0 4-4 4H4q-4 0-4-4z" fill="#096e66"/><path d="M42 22v28M31 40.500 42 51.500 53 40.500M30.500 57.500h23" fill="none" stroke="#fff" stroke-width="4" stroke-linecap="round" stroke-linejoin="round"/></svg>Downloads</a>
      </div>
    </section>

    <section class="mt-[35px]">
      <h2 class="flex items-center pl-10 pr-[30px] text-[#20308a]"><button class="flex items-center gap-[19px]"><svg class="h-[9px] w-3 text-[#444]"><use href="#i-chev"/></svg>驱动器 (3)</button><span class="ml-[18px] h-px flex-1 bg-[#d9d9d9]"></span></h2>
      <div class="mt-4 grid grid-cols-[repeat(auto-fill,390px)] gap-x-[9px] gap-y-2.5 pl-[31px] pr-[330px]">
        <a href="#" class="flex h-[102px] items-center gap-[18px] rounded-[19px] bg-[#bde6fd] pl-[27px] pr-[21px]">
          <svg class="size-[72px] shrink-0" viewBox="0 0 72 72"><path d="M5 5q1-5 6-5h50q5 0 6 5l4 42H1z" fill="url(#g-drv)"/><path d="M0 49q0-3 4-3h64q4 0 4 3v18q0 5-5 5H5q-5 0-5-5z" fill="url(#g-drvf)"/><rect x="10" y="56" width="40" height="6" rx="1" fill="#666b70"/><circle cx="60" cy="59" r="5" fill="#e3efe9"/><circle cx="60" cy="59" r="3.300" fill="#0f9a5c"/><path d="M22 15l10.500-1.800V24H22zM34.500 13 50 10.500V24H34.500zM22 26h10.500v10.800L22 35zM34.500 26H50v13.500L34.500 37z" fill="#fff"/></svg>
          <span class="flex-1"><span class="block">System (C:)</span><span class="my-px block h-[21px] overflow-hidden rounded-full bg-[#e4e5e6]"><span class="block h-full rounded-full bg-[#269fda]" style="width:52.4%"></span></span><span class="block">71.5 G可用，共150 G</span></span>
        </a>
        <a href="#" class="flex h-[102px] items-center gap-[18px] rounded-[19px] pl-[27px] pr-[21px]">
          <svg class="size-[72px] shrink-0" viewBox="0 0 72 72"><path d="M5 5q1-5 6-5h50q5 0 6 5l4 42H1z" fill="url(#g-drv)"/><path d="M0 49q0-3 4-3h64q4 0 4 3v18q0 5-5 5H5q-5 0-5-5z" fill="url(#g-drvf)"/><rect x="10" y="56" width="40" height="6" rx="1" fill="#666b70"/><circle cx="60" cy="59" r="5" fill="#e3efe9"/><circle cx="60" cy="59" r="3.300" fill="#0f9a5c"/><text x="36" y="32" font-size="24" fill="#fff" text-anchor="middle">D:</text></svg>
          <span class="flex-1"><span class="block">Data (D:)</span><span class="my-px block h-[21px] overflow-hidden rounded-full bg-[#e4e5e6]"><span class="block h-full rounded-full bg-[#269fda]" style="width:62%"></span></span><span class="block">124 G可用，共326 G</span></span>
        </a>
        <a href="#" class="flex h-[102px] items-center gap-[18px] rounded-[19px] pl-[27px] pr-[21px]">
          <svg class="size-[72px] shrink-0" viewBox="0 0 72 72"><path d="M5 5q1-5 6-5h50q5 0 6 5l4 42H1z" fill="url(#g-drv)"/><path d="M0 49q0-3 4-3h64q4 0 4 3v18q0 5-5 5H5q-5 0-5-5z" fill="url(#g-drvf)"/><rect x="10" y="56" width="40" height="6" rx="1" fill="#666b70"/><circle cx="60" cy="59" r="5" fill="#e3efe9"/><circle cx="60" cy="59" r="3.300" fill="#0f9a5c"/><text x="34" y="32" font-size="24" fill="#fff" text-anchor="middle">E:</text></svg>
          <span class="flex-1"><span class="block">Fun (E:)</span><span class="my-px block h-[21px] overflow-hidden rounded-full bg-[#e4e5e6]"><span class="block h-full rounded-full bg-[#269fda]" style="width:81.7%"></span></span><span class="block">87.7 G可用，共475 G</span></span>
        </a>
      </div>
    </section>

    <section class="mt-[34px]">
      <h2 class="flex items-center pl-10 pr-[30px] text-[#20308a]"><button class="flex items-center gap-[19px]"><svg class="h-[9px] w-3 text-[#444]"><use href="#i-chev"/></svg>最近打开 (29)</button><span class="ml-[18px] h-px flex-1 bg-[#d9d9d9]"></span></h2>
      <div class="mt-[18px] flex flex-wrap pl-[27px] pr-[10px] [&>a]:flex [&>a]:h-12 [&>a]:items-center [&>a]:gap-[11px] [&>a]:pl-[30px] [&>a]:pr-[31px] [&_svg]:h-[22px] [&_svg]:w-[22px]">
        <a href="#"><svg viewBox="0 0 22 22"><use href="#i-word"/><text x="6" y="14.500" font-size="10" font-weight="700" fill="#fff" text-anchor="middle">W</text></svg>xxx客户方案_v3.docx</a>
        <a href="#"><svg viewBox="0 0 22 22"><use href="#i-word"/><text x="6" y="14.500" font-size="10" font-weight="700" fill="#fff" text-anchor="middle">W</text></svg>xxx客户方案_v2.docx</a>
        <a href="#"><svg viewBox="0 0 22 22"><use href="#i-word"/><text x="6" y="14.500" font-size="10" font-weight="700" fill="#fff" text-anchor="middle">W</text></svg>xxx客户方案_v1.docx</a>
        <a href="#"><svg><use href="#i-115"/></svg>115chrome.exe</a>
        <a href="#"><svg><use href="#i-chrome"/></svg>index.html</a>
        <a href="#"><svg><use href="#i-css"/></svg>style.css</a>
        <a href="#"><svg><use href="#i-png"/></svg>人物-塞尔达.png</a>
        <a href="#"><svg><use href="#i-png"/></svg>前行.png</a>
        <a href="#"><svg viewBox="0 0 22 22"><use href="#i-ppt"/><text x="6.500" y="14.500" font-size="10" font-weight="700" fill="#fff" text-anchor="middle">P</text></svg>images.pptx</a>
        <a href="#"><svg><use href="#i-code"/></svg>compile.exe</a>
        <a href="#"><svg><use href="#i-code"/></svg>clear.exe</a>
        <a href="#"><svg viewBox="0 0 24 24"><use href="#i-vs"/><text x="19" y="7" font-size="7" font-weight="700" fill="#fff" text-anchor="middle">17</text></svg>AllenExplorer.sln</a>
        <a href="#"><svg><use href="#i-fs"/></svg>FSCapture.exe</a>
        <a href="#"><svg><use href="#i-cube"/></svg>PowerWord.800.12012.exe</a>
        <a href="#"><svg><use href="#i-chrome"/></svg>Snipaste.url</a>
        <a href="#"><svg><use href="#i-txt"/></svg>Bandicam.txt</a>
        <a href="#"><svg><use href="#i-chrome"/></svg>Bandicam.url</a>
        <a href="#"><svg><use href="#i-setup"/></svg>Set-up.exe</a>
        <a href="#"><svg><use href="#i-txt"/></svg>Paths.txt</a>
        <a href="#"><svg><use href="#i-txt"/></svg>config.ini</a>
        <a href="#"><svg><use href="#i-txt"/></svg>config.ini</a>
        <a href="#"><svg><use href="#i-txt"/></svg>Bandizip.x64.ini</a>
        <a href="#"><svg><use href="#i-txt"/></svg>config.ini</a>
        <a href="#"><svg><use href="#i-txt"/></svg>Bandizip.x86.ini</a>
        <a href="#"><svg><use href="#i-txt"/></svg>邮箱.txt</a>
        <a href="#"><svg><use href="#i-txt"/></svg>VersionNo.ini</a>
        <a href="#"><svg><use href="#i-chrome"/></svg>完美解码.url</a>
        <a href="#"><svg><use href="#i-chrome"/></svg>阿里旺旺.url</a>
        <a href="#"><svg><use href="#i-chrome"/></svg>Foxmail.url</a>
      </div>
    </section>
  </main>
</div>
</body>
</html>
